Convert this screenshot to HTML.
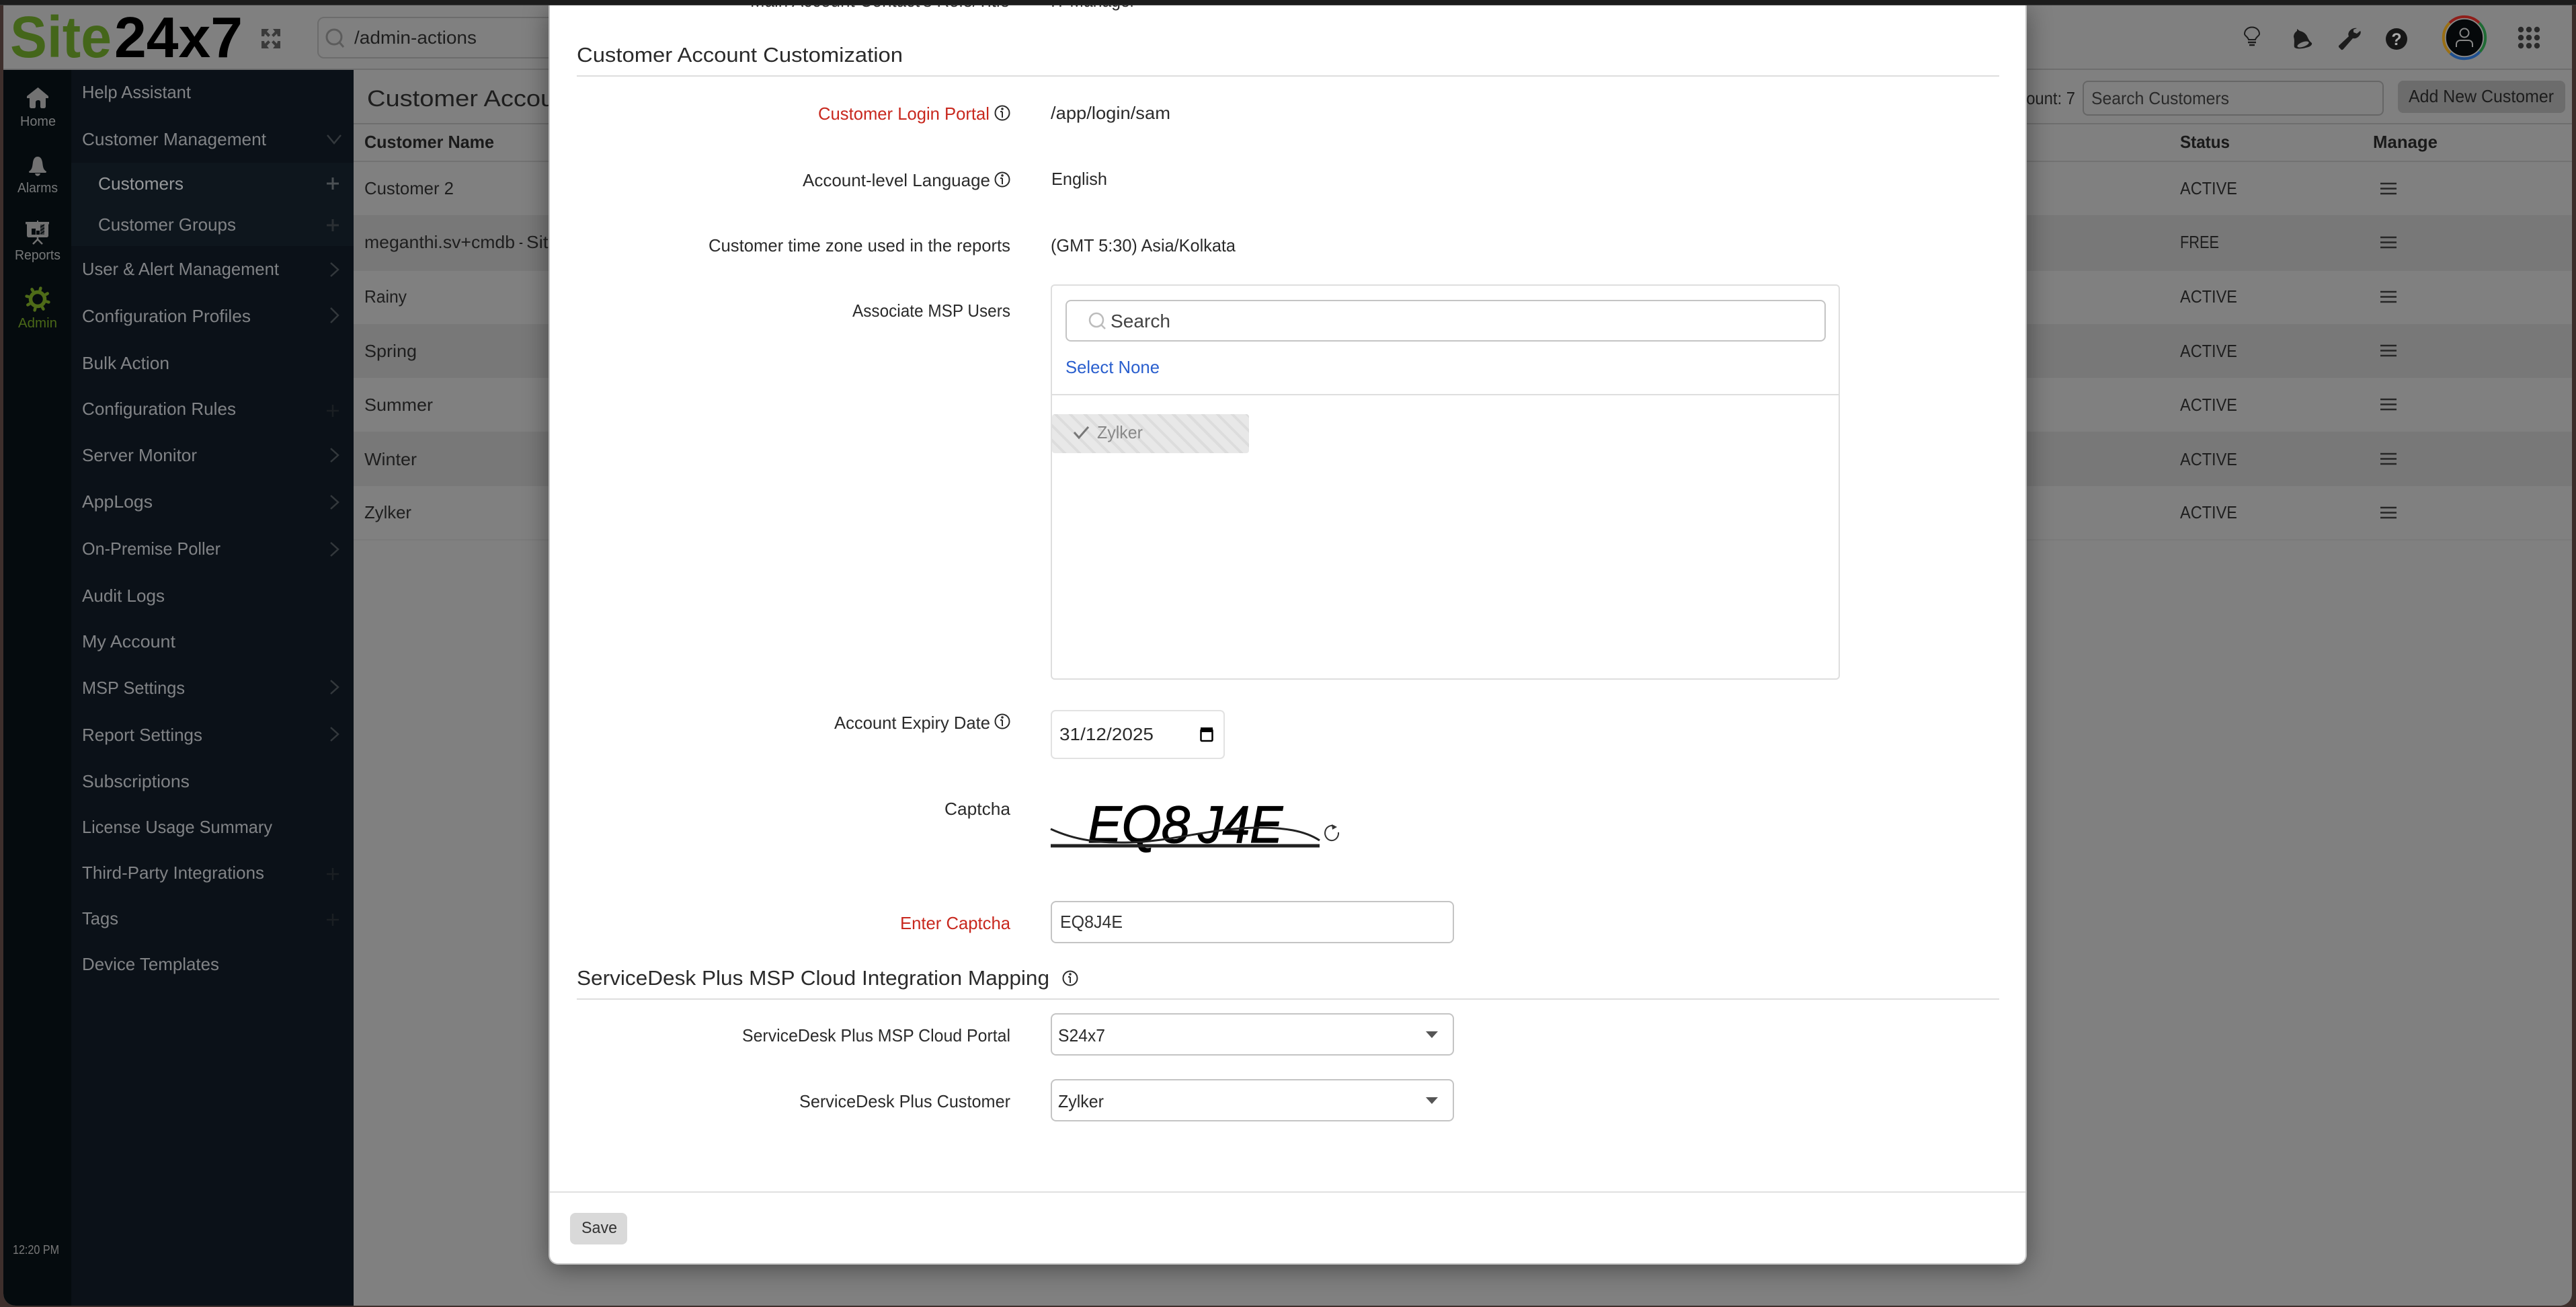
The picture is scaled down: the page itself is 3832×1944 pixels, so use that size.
<!DOCTYPE html>
<html lang="en">
<head>
<meta charset="utf-8">
<title>Site24x7 - Customer Account</title>
<style>
html,body{margin:0;padding:0;width:3832px;height:1944px;overflow:hidden;background:#3e2f2c}
body{position:relative}
*{box-sizing:border-box}
.abs{position:absolute}
svg{position:absolute;display:block;overflow:hidden}
text{font-family:"Liberation Sans",sans-serif;white-space:pre}
.m{font-size:26px;fill:#818386}
.sub{font-size:26px;fill:#96989a}
.r{font-size:20px;fill:#767879}
.d{font-size:26px;fill:#1e1e1e}
.b{font-size:26px;font-weight:bold;fill:#1a1a1a}
.l{font-size:26px;fill:#2b2b2b}
.red{font-size:26px;fill:#c8281e}
.h{font-size:31px;fill:#2b2b2b}
.row{position:absolute;left:526px;width:3300px}
</style>
</head>
<body>
<div class="abs" style="left:5px;top:8px;width:3821px;height:1934px;background:#808080;border-radius:0 0 18px 18px;overflow:hidden">
</div>
<div class="abs" style="left:5px;top:102px;width:3821px;height:2px;background:#6e6e6e"></div>
<div class="abs" style="left:5px;top:104px;width:101px;height:1838px;background:#050b0e;border-radius:0 0 0 18px"></div>
<div class="abs" style="left:106px;top:104px;width:420px;height:1838px;background:#0b1118"></div>
<div class="abs" style="left:106px;top:242px;width:420px;height:124px;background:#0e161d"></div>
<div class="abs" style="left:526px;top:183px;width:3300px;height:2px;background:#6e6e6e"></div>
<div class="abs" style="left:526px;top:239px;width:3300px;height:2px;background:#727272"></div>
<div class="row" style="top:320px;height:83px;background:#787878"></div>
<div class="row" style="top:482px;height:80px;background:#787878"></div>
<div class="row" style="top:642px;height:81px;background:#787878"></div>
<div class="row" style="top:802px;height:2px;background:#7a7a7a"></div>
<div class="abs" style="left:472px;top:25px;width:500px;height:62px;border:2px solid #6c6c6c;border-radius:10px"></div>
<div class="abs" style="left:3098px;top:120px;width:448px;height:52px;border:2px solid #666;border-radius:8px"></div>
<div class="abs" style="left:3567px;top:120px;width:249px;height:48px;background:#6c6c6c;border-radius:8px"></div>

<svg style="left:0;top:0" width="3832" height="1944" viewBox="0 0 3832 1944">
  <!-- logo -->
  <text x="15" y="85" font-size="87" font-weight="bold" fill="#44661a" textLength="151" lengthAdjust="spacingAndGlyphs">Site</text>
  <text x="170" y="85" font-size="85" font-weight="bold" fill="#000" textLength="191" lengthAdjust="spacingAndGlyphs">24x7</text>
  <!-- expand -->
  <g fill="#3a3a3a">
    <path d="M389 43H400L397 47L402 52L399 55L394 50L393 54H389Z"/>
    <path d="M417 43H406L409 47L404 52L407 55L412 50L413 54H417Z"/>
    <path d="M389 72H400L397 68L402 63L399 60L394 65L393 61H389Z"/>
    <path d="M417 72H406L409 68L404 63L407 60L412 65L413 61H417Z"/>
  </g>
  <!-- search -->
  <circle cx="497" cy="55" r="11" fill="none" stroke="#5c5c5c" stroke-width="3"/>
  <path d="M505 63L511 70" stroke="#5c5c5c" stroke-width="3"/>
  <text x="527" y="65" font-size="27" fill="#1e1e1e" textLength="182" lengthAdjust="spacingAndGlyphs">/admin-actions</text>

  <!-- rail -->
  <path d="M56.500 130L72 143V146H68V158C68 160 67 161 65 161H62C61 161 60 160 60 159V152C60 150 59 149 57 149C55 149 53 150 53 152V159C53 160 52 161 51 161H47C45 161 44 160 44 158V146H40V143Z" fill="#727272"/>
  <text class="r" x="30" y="187" textLength="53" lengthAdjust="spacingAndGlyphs">Home</text>
  <path d="M56 233C60 233 62 236 63 241C64 248 64 252 69 255C69 257 68 257 67 257H45C44 257 43 257 43 255C48 252 48 248 49 241C50 236 52 233 56 233ZM52 258H60C59 263 53 263 52 258Z" fill="#727272"/>
  <text class="r" x="26" y="286" textLength="60" lengthAdjust="spacingAndGlyphs">Alarms</text>
  <path d="M55 328H57V330H73V333.500H72V350C72 352 71 353 69 353H43C41 353 40 352 40 350V333.500H38V330H55Z" fill="#727272"/>
  <rect x="47" y="340" width="6" height="9" fill="#050b0e"/><rect x="54" y="343" width="5" height="6" fill="#050b0e"/><rect x="60" y="334" width="6" height="15" fill="#3a3d3f"/>
  <path d="M60 338L66 334M60 343L66 339M60 348L66 344" stroke="#050b0e" stroke-width="1.500"/>
  <path d="M56 353V356M56 356L49 363M56 356L63 363" stroke="#727272" stroke-width="2.500" fill="none"/>
  <text class="r" x="22" y="386" textLength="68" lengthAdjust="spacingAndGlyphs">Reports</text>
  <g fill="none" stroke="#4e6b18">
    <circle cx="56" cy="445" r="10.500" stroke-width="5.500"/>
    <g stroke-width="4.500" stroke-linecap="round" transform="rotate(15 56 445)">
      <path d="M56 431V428M56 459V462M42 445H39M70 445H73M46 435L44 433M66 455L68 457M66 435L68 433M46 455L44 457"/>
    </g>
  </g>
  <text x="27" y="487" font-size="20" fill="#4a6818" textLength="58" lengthAdjust="spacingAndGlyphs">Admin</text>
  <text x="19" y="1865" font-size="18" fill="#787878" textLength="69" lengthAdjust="spacingAndGlyphs">12:20 PM</text>

  <!-- menu -->
  <text class="m" x="122" y="146" textLength="162" lengthAdjust="spacingAndGlyphs">Help Assistant</text>
  <text class="m" x="122" y="216" textLength="274" lengthAdjust="spacingAndGlyphs">Customer Management</text>
  <text class="sub" x="146" y="282" textLength="127" lengthAdjust="spacingAndGlyphs">Customers</text>
  <text class="m" x="146" y="343" textLength="205" lengthAdjust="spacingAndGlyphs">Customer Groups</text>
  <text class="m" x="122" y="409" textLength="293" lengthAdjust="spacingAndGlyphs">User &amp; Alert Management</text>
  <text class="m" x="122" y="479" textLength="251" lengthAdjust="spacingAndGlyphs">Configuration Profiles</text>
  <text class="m" x="122" y="549" textLength="130" lengthAdjust="spacingAndGlyphs">Bulk Action</text>
  <text class="m" x="122" y="617" textLength="229" lengthAdjust="spacingAndGlyphs">Configuration Rules</text>
  <text class="m" x="122" y="686" textLength="171" lengthAdjust="spacingAndGlyphs">Server Monitor</text>
  <text class="m" x="122" y="755" textLength="105" lengthAdjust="spacingAndGlyphs">AppLogs</text>
  <text class="m" x="122" y="825" textLength="206" lengthAdjust="spacingAndGlyphs">On-Premise Poller</text>
  <text class="m" x="122" y="895" textLength="123" lengthAdjust="spacingAndGlyphs">Audit Logs</text>
  <text class="m" x="122" y="963" textLength="139" lengthAdjust="spacingAndGlyphs">My Account</text>
  <text class="m" x="122" y="1032" textLength="153" lengthAdjust="spacingAndGlyphs">MSP Settings</text>
  <text class="m" x="122" y="1102" textLength="179" lengthAdjust="spacingAndGlyphs">Report Settings</text>
  <text class="m" x="122" y="1171" textLength="160" lengthAdjust="spacingAndGlyphs">Subscriptions</text>
  <text class="m" x="122" y="1239" textLength="283" lengthAdjust="spacingAndGlyphs">License Usage Summary</text>
  <text class="m" x="122" y="1307" textLength="271" lengthAdjust="spacingAndGlyphs">Third-Party Integrations</text>
  <text class="m" x="122" y="1375" textLength="54" lengthAdjust="spacingAndGlyphs">Tags</text>
  <text class="m" x="122" y="1443" textLength="204" lengthAdjust="spacingAndGlyphs">Device Templates</text>
  <g fill="none" stroke="#33383c" stroke-width="2.500">
    <path d="M487 201L497 213L507 201"/>
    <path d="M492 391L503 401L492 411M492 458L503 469L492 480M492 667L503 677L492 687M492 737L503 747L492 757M492 807L503 817L492 827M492 1012L503 1022L492 1032M492 1082L503 1092L492 1102"/>
  </g>
  <path d="M486 273H504M495 264V282" stroke="#4b5054" stroke-width="3"/>
  <path d="M486 335H504M495 326V344" stroke="#2a2f33" stroke-width="3"/>
  <path d="M486 611H504M495 602V620M486 1300H504M495 1291V1309M486 1368H504M495 1359V1377" stroke="#1b1f23" stroke-width="2.500"/>

  <!-- main -->
  <text x="546" y="158" font-size="34" fill="#1e1e1e" textLength="330" lengthAdjust="spacingAndGlyphs">Customer Accounts</text>
  <text class="b" x="542" y="220" textLength="193" lengthAdjust="spacingAndGlyphs">Customer Name</text>
  <text class="d" x="542" y="289" textLength="133" lengthAdjust="spacingAndGlyphs">Customer 2</text>
  <text class="d" x="542" y="369" textLength="224" lengthAdjust="spacingAndGlyphs">meganthi.sv+cmdb</text>
  <text class="d" x="772" y="369" textLength="6" lengthAdjust="spacingAndGlyphs">-</text>
  <text class="d" x="783" y="369" textLength="48" lengthAdjust="spacingAndGlyphs">Site</text>
  <text class="d" x="542" y="450" textLength="63" lengthAdjust="spacingAndGlyphs">Rainy</text>
  <text class="d" x="542" y="531" textLength="78" lengthAdjust="spacingAndGlyphs">Spring</text>
  <text class="d" x="542" y="611" textLength="102" lengthAdjust="spacingAndGlyphs">Summer</text>
  <text class="d" x="542" y="692" textLength="78" lengthAdjust="spacingAndGlyphs">Winter</text>
  <text class="d" x="542" y="771" textLength="70" lengthAdjust="spacingAndGlyphs">Zylker</text>

  <text class="d" x="2997" y="155" textLength="90" lengthAdjust="spacingAndGlyphs">Count: 7</text>
  <text x="3111" y="155" font-size="26" fill="#2a2a2a" textLength="205" lengthAdjust="spacingAndGlyphs">Search Customers</text>
  <text x="3583" y="152" font-size="26" fill="#1c1c1c" textLength="216" lengthAdjust="spacingAndGlyphs">Add New Customer</text>
  <text class="b" x="3243" y="220" textLength="74" lengthAdjust="spacingAndGlyphs">Status</text>
  <text class="b" x="3530" y="220" textLength="96" lengthAdjust="spacingAndGlyphs">Manage</text>
  <text class="d" x="3243" y="289" textLength="85" lengthAdjust="spacingAndGlyphs">ACTIVE</text>
  <text class="d" x="3243" y="369" textLength="58" lengthAdjust="spacingAndGlyphs">FREE</text>
  <text class="d" x="3243" y="450" textLength="85" lengthAdjust="spacingAndGlyphs">ACTIVE</text>
  <text class="d" x="3243" y="531" textLength="85" lengthAdjust="spacingAndGlyphs">ACTIVE</text>
  <text class="d" x="3243" y="611" textLength="85" lengthAdjust="spacingAndGlyphs">ACTIVE</text>
  <text class="d" x="3243" y="692" textLength="85" lengthAdjust="spacingAndGlyphs">ACTIVE</text>
  <text class="d" x="3243" y="771" textLength="85" lengthAdjust="spacingAndGlyphs">ACTIVE</text>
  <g stroke="#262626" stroke-width="2.400">
    <path d="M3541 273H3565M3541 280.500H3565M3541 288H3565"/>
    <path d="M3541 353H3565M3541 360.500H3565M3541 368H3565"/>
    <path d="M3541 434H3565M3541 441.500H3565M3541 449H3565"/>
    <path d="M3541 514H3565M3541 521.500H3565M3541 529H3565"/>
    <path d="M3541 594H3565M3541 601.500H3565M3541 609H3565"/>
    <path d="M3541 675H3565M3541 682.500H3565M3541 690H3565"/>
    <path d="M3541 755H3565M3541 762.500H3565M3541 770H3565"/>
  </g>

  <!-- header icons -->
  <g fill="none" stroke="#1c1c1c" stroke-width="2">
    <path d="M3345 59C3344 55 3339 53 3339 50.500C3339 44.500 3344 40.500 3350 40.500C3356 40.500 3361 44.500 3361 50.500C3361 53 3356 55 3355 59Z"/>
    <path d="M3344 63H3356M3346 67H3354" stroke-width="2.500"/>
  </g>
  <path d="M3417 43L3421 46C3426 47 3430 50 3432 54C3434 58 3435 61 3439 64C3440 67 3436 70 3430 71C3423 73 3415 73 3413 70C3412 66 3414 61 3412 55C3412 51 3414 48 3417 46Z" fill="#1c1c1c"/>
  <ellipse cx="3426" cy="66" rx="9" ry="3.500" transform="rotate(-20 3426 66)" fill="#808080"/>
  <path d="M3479 70L3483 74C3484 74.500 3485 74 3486 73L3500 57C3505 58 3509 55 3511 51C3512 49 3512 47 3511 46L3506 50L3501 48L3501 44L3506 42C3501 41 3496 44 3494 48C3493 50 3493 52 3494 54L3479 68Z" fill="#1c1c1c"/>
  <circle cx="3565" cy="58" r="16" fill="#161616"/>
  <text x="3565" y="67" font-size="25" font-weight="bold" fill="#aaa" text-anchor="middle">?</text>
  <g fill="none" stroke-width="4">
    <path d="M3644 34A31 31 0 0 1 3688 34" stroke="#8f1e1a"/>
    <path d="M3688 34A31 31 0 0 1 3689 77" stroke="#1f6b34"/>
    <path d="M3689 77A31 31 0 0 1 3645 79" stroke="#1e4f8f"/>
    <path d="M3645 79A31 31 0 0 1 3644 34" stroke="#9a6f14"/>
  </g>
  <circle cx="3666" cy="56" r="28" fill="#05080a" stroke="#8a8a8a" stroke-width="1.500"/>
  <circle cx="3666" cy="49" r="6.500" fill="none" stroke="#888" stroke-width="2"/>
  <path d="M3654 70V66C3654 62 3657 60 3660 60H3672C3675 60 3678 62 3678 66V70" fill="none" stroke="#888" stroke-width="2"/>
  <g fill="#2a2a2a">
    <circle cx="3750" cy="44" r="4.200"/><circle cx="3762" cy="44" r="4.200"/><circle cx="3774" cy="44" r="4.200"/>
    <circle cx="3750" cy="56" r="4.200"/><circle cx="3762" cy="56" r="4.200"/><circle cx="3774" cy="56" r="4.200"/>
    <circle cx="3750" cy="68" r="4.200"/><circle cx="3762" cy="68" r="4.200"/><circle cx="3774" cy="68" r="4.200"/>
  </g>
</svg>

<!-- modal -->
<div class="abs" style="left:816px;top:8px;width:2199px;height:1873px;background:#fff;border-radius:0 0 14px 14px;box-shadow:0 6px 38px rgba(0,0,0,.42);border-right:2px solid #c4c4c4;border-left:2px solid #c4c4c4;border-bottom:2px solid #c4c4c4"></div>
<div class="abs" style="left:1563px;top:423px;width:1174px;height:588px;border:2px solid #dedede;border-radius:6px"></div>
<div class="abs" style="left:1585px;top:446px;width:1131px;height:62px;border:2px solid #c4c4c4;border-radius:8px"></div>
<div class="abs" style="left:1563px;top:586px;width:1174px;height:2px;background:#dedede"></div>
<div class="abs" style="left:1565px;top:616px;width:293px;height:58px;border-radius:4px;background:repeating-linear-gradient(45deg,#e8e8e8 0,#e8e8e8 11.500px,#dcdcdc 11.500px,#dcdcdc 15.500px)"></div>
<div class="abs" style="left:1563px;top:1056px;width:259px;height:73px;border:2px solid #e2e2e2;border-radius:7px"></div>
<div class="abs" style="left:1563px;top:1340px;width:600px;height:63px;border:2px solid #c4c4c4;border-radius:8px"></div>
<div class="abs" style="left:1563px;top:1507px;width:600px;height:63px;border:2px solid #c4c4c4;border-radius:8px"></div>
<div class="abs" style="left:1563px;top:1605px;width:600px;height:63px;border:2px solid #c4c4c4;border-radius:8px"></div>
<div class="abs" style="left:858px;top:112px;width:2116px;height:2px;background:#dedede"></div>
<div class="abs" style="left:858px;top:1485px;width:2116px;height:2px;background:#dedede"></div>
<div class="abs" style="left:818px;top:1772px;width:2195px;height:2px;background:#e0e0e0"></div>
<div class="abs" style="left:848px;top:1804px;width:85px;height:47px;background:#d9d9d9;border-radius:8px"></div>

<svg style="left:816px;top:8px" width="2199" height="1873" viewBox="816 8 2199 1873">
  <text class="l" x="1116" y="10" textLength="386" lengthAdjust="spacingAndGlyphs">Main Account Contact's Role/Title</text>
  <text class="l" x="1563" y="10" textLength="126" lengthAdjust="spacingAndGlyphs">IT Manager</text>
  <text class="h" x="858" y="92" textLength="485" lengthAdjust="spacingAndGlyphs">Customer Account Customization</text>

  <text class="red" x="1217" y="178" textLength="255" lengthAdjust="spacingAndGlyphs">Customer Login Portal</text>
  <text class="l" x="1563" y="177" textLength="178" lengthAdjust="spacingAndGlyphs">/app/login/sam</text>
  <text class="l" x="1194" y="277" textLength="279" lengthAdjust="spacingAndGlyphs">Account-level Language</text>
  <text class="l" x="1564" y="275" textLength="83" lengthAdjust="spacingAndGlyphs">English</text>
  <text class="l" x="1054" y="374" textLength="449" lengthAdjust="spacingAndGlyphs">Customer time zone used in the reports</text>
  <text class="l" x="1563" y="374" textLength="275" lengthAdjust="spacingAndGlyphs">(GMT 5:30) Asia/Kolkata</text>
  <text class="l" x="1268" y="471" textLength="235" lengthAdjust="spacingAndGlyphs">Associate MSP Users</text>

  <g fill="none" stroke="#2b2b2b" stroke-width="2">
    <circle cx="1491" cy="168" r="10.500"/><path d="M1491 166V175M1488 166H1491"/><circle cx="1491" cy="162" r=".8"/>
    <circle cx="1491" cy="267" r="10.500"/><path d="M1491 265V274M1488 265H1491"/><circle cx="1491" cy="261" r=".8"/>
    <circle cx="1491" cy="1073" r="10.500"/><path d="M1491 1071V1080M1488 1071H1491"/><circle cx="1491" cy="1067" r=".8"/>
    <circle cx="1592" cy="1455" r="10.500"/><path d="M1592 1453V1462M1589 1453H1592"/><circle cx="1592" cy="1449" r=".8"/>
  </g>

  <circle cx="1631" cy="476" r="10" fill="none" stroke="#bcbcbc" stroke-width="2.500"/>
  <path d="M1638 483L1644 489" stroke="#bcbcbc" stroke-width="2.500"/>
  <text x="1652" y="487" font-size="28" fill="#444" textLength="89" lengthAdjust="spacingAndGlyphs">Search</text>
  <text x="1585" y="555" font-size="26" fill="#2a5fce" textLength="140" lengthAdjust="spacingAndGlyphs">Select None</text>
  <path d="M1598 643L1605 651L1619 635" fill="none" stroke="#777" stroke-width="3"/>
  <text x="1632" y="652" font-size="26" fill="#888" textLength="68" lengthAdjust="spacingAndGlyphs">Zylker</text>

  <text class="l" x="1241" y="1084" textLength="232" lengthAdjust="spacingAndGlyphs">Account Expiry Date</text>
  <text class="l" x="1576" y="1101" textLength="140" lengthAdjust="spacingAndGlyphs">31/12/2025</text>
  <rect x="1786.500" y="1085" width="17" height="17" rx="1.500" fill="none" stroke="#000" stroke-width="2.500"/>
  <path d="M1786 1082H1804V1089H1786Z" fill="#000"/>

  <text class="l" x="1405" y="1212" textLength="98" lengthAdjust="spacingAndGlyphs">Captcha</text>
  <g font-size="78" font-style="italic" fill="#000" stroke="#000" stroke-width="1.300">
    <text x="1618" y="1253" textLength="152" lengthAdjust="spacingAndGlyphs">EQ8</text>
    <text x="1782" y="1253" textLength="126" lengthAdjust="spacingAndGlyphs">J4E</text>
  </g>
  <path d="M1563 1233C1600 1250 1635 1254 1680 1253C1740 1252 1800 1232 1870 1231C1910 1231 1940 1235 1963 1250" fill="none" stroke="#222" stroke-width="3"/>
  <path d="M1563 1258H1963" stroke="#222" stroke-width="5"/>
  <path d="M1985 1229A10 11 0 1 0 1991 1238" fill="none" stroke="#333" stroke-width="2"/>
  <path d="M1981 1226L1989 1230L1982 1234Z" fill="#333"/>

  <text class="red" x="1339" y="1382" textLength="164" lengthAdjust="spacingAndGlyphs">Enter Captcha</text>
  <text x="1577" y="1380" font-size="26" fill="#333" textLength="93" lengthAdjust="spacingAndGlyphs">EQ8J4E</text>

  <text class="h" x="858" y="1465" textLength="703" lengthAdjust="spacingAndGlyphs">ServiceDesk Plus MSP Cloud Integration Mapping</text>
  <text class="l" x="1104" y="1549" textLength="399" lengthAdjust="spacingAndGlyphs">ServiceDesk Plus MSP Cloud Portal</text>
  <text class="l" x="1574" y="1549" textLength="70" lengthAdjust="spacingAndGlyphs">S24x7</text>
  <path d="M2121 1534H2139L2130 1544Z" fill="#555"/>
  <text class="l" x="1189" y="1647" textLength="314" lengthAdjust="spacingAndGlyphs">ServiceDesk Plus Customer</text>
  <text class="l" x="1574" y="1647" textLength="68" lengthAdjust="spacingAndGlyphs">Zylker</text>
  <path d="M2121 1632H2139L2130 1642Z" fill="#555"/>
  <text x="865" y="1834" font-size="24" fill="#333" textLength="53" lengthAdjust="spacingAndGlyphs">Save</text>
</svg>

<div class="abs" style="left:0;top:0;width:3832px;height:7px;background:#1c1c1c"></div>
<div class="abs" style="left:0;top:7px;width:3832px;height:1px;background:#3c3c3c"></div>
<div class="abs" style="left:0;top:8px;width:5px;height:1936px;background:#3e2f2c"></div>
<div class="abs" style="left:3826px;top:8px;width:6px;height:1936px;background:#3b2d2a"></div>
</body>
</html>
